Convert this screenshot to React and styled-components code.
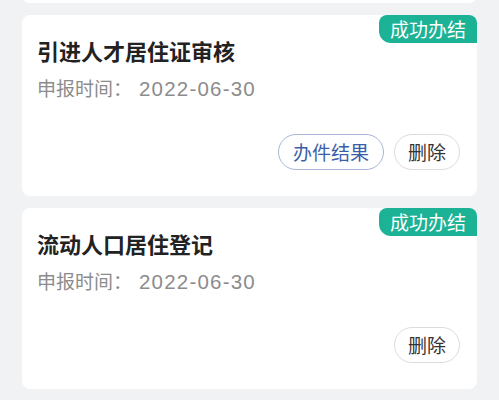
import React from "react";
import styled, { createGlobalStyle } from "styled-components";

const Global = createGlobalStyle`
  html, body { margin: 0; padding: 0; background: #f1f2f4; }
  body { font-family: "Noto Sans CJK SC", "Noto Sans", sans-serif; overflow: hidden; }
`;

const Page = styled.div`
  display: flex;
  flex-direction: column;
  gap: 12px;
  padding: 0 22px;
  margin-top: -178px;
`;

const Card = styled.div`
  position: relative;
  background: #ffffff;
  border-radius: 8px;
  height: 181px;
  box-sizing: border-box;
  padding: 20px 16px 0 15px;
  display: flex;
  flex-direction: column;
`;

const Badge = styled.div`
  position: absolute;
  top: 0;
  right: 0;
  height: 28px;
  width: 98px;
  background: #1bb295;
  color: #ffffff;
  font-size: 19px;
  line-height: 28px;
  text-align: center;
  border-radius: 8px 8px 0 12px;
`;

const Title = styled.div`
  font-size: 22px;
  line-height: 30px;
  font-weight: 700;
  color: #222222;
`;

const Meta = styled.div`
  margin-top: 10px;
  font-size: 19px;
  line-height: 26px;
  color: #8c8c8c;
  display: flex;
  align-items: baseline;
`;

const DateText = styled.span`
  font-family: "Liberation Sans", Arial, sans-serif;
  font-size: 20.5px;
  letter-spacing: 1.2px;
  margin-left: 7px;
`;

const Actions = styled.div`
  margin-top: 32px;
  display: flex;
  justify-content: flex-end;
  gap: 9px;
`;

const Pill = styled.button`
  height: 36px;
  box-sizing: border-box;
  padding: 0 ${(p) => (p.$primary ? "14px" : "13px")};
  border-radius: 18px;
  background: #ffffff;
  font-family: "Noto Sans CJK SC", sans-serif;
  font-size: 19px;
  line-height: 34px;
  border: 1px solid ${(p) => (p.$primary ? "#a7b6d6" : "#dcdcdc")};
  color: ${(p) => (p.$primary ? "#3b5ea9" : "#333333")};
  margin-right: 1px;
`;

const items = [
  { title: "引进人才居住证审核", date: "2022-06-30", result: true },
  { title: "流动人口居住登记", date: "2022-06-30", result: false },
];

export default function App() {
  return (
    <>
      <Global />
      <Page>
        <Card />
        {items.map((it, i) => (
          <Card key={i}>
            <Badge>成功办结</Badge>
            <Title>{it.title}</Title>
            <Meta>
              申报时间：<DateText>{it.date}</DateText>
            </Meta>
            <Actions>
              {it.result && <Pill $primary>办件结果</Pill>}
              <Pill>删除</Pill>
            </Actions>
          </Card>
        ))}
      </Page>
    </>
  );
}
